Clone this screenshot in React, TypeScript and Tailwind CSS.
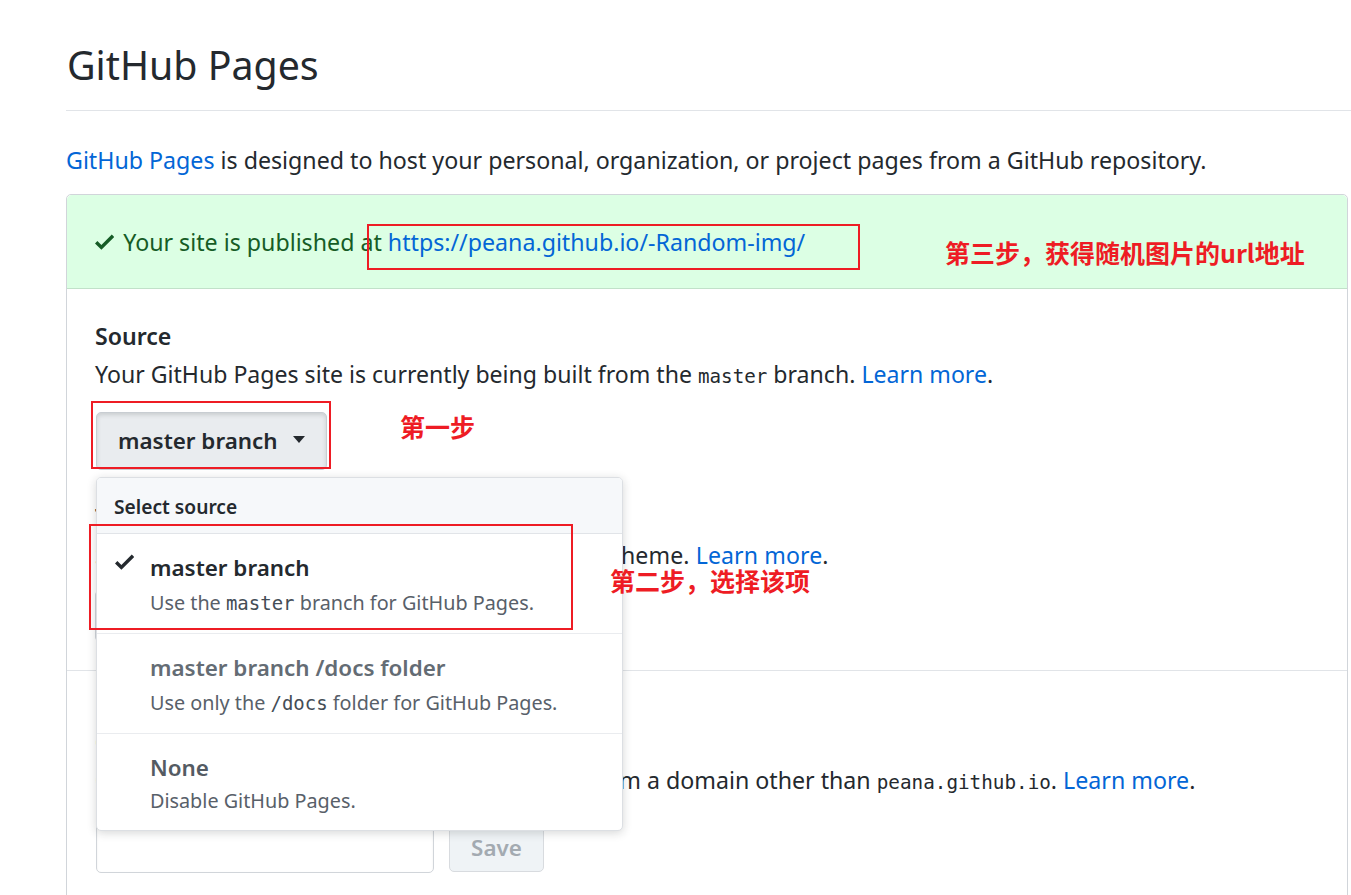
import React from "react";

const mono = { fontFamily: '"DejaVu Sans Mono", "Liberation Mono", monospace' };

function Check({ className, color }: { className?: string; color: string }) {
  return (
    <svg viewBox="0 0 12 16" className={className} fill={color} aria-hidden>
      <path fillRule="evenodd" d="M12 5l-8 8-4-4 1.5-1.5L4 10l6.5-6.5L12 5z" />
    </svg>
  );
}

function Caret() {
  return (
    <span className="inline-block w-0 h-0 border-t-[7px] border-t-[#24292e] border-x-[6.5px] border-x-transparent align-middle ml-[15px] mb-[3px]" />
  );
}

function Annot({ children, className }: { children: React.ReactNode; className: string }) {
  return (
    <div
      className={"absolute whitespace-nowrap font-bold text-[25px] leading-[32px] text-[#ee1c24] " + className}
      style={{ fontFamily: '"Noto Sans CJK SC", "Noto Sans", sans-serif' }}
    >
      {children}
    </div>
  );
}

export default function App() {
  return (
    <div
      className="relative w-[1351px] h-[895px] overflow-hidden bg-white text-[#24292e]"
      style={{ fontFamily: '"Noto Sans", "Noto Sans CJK SC", sans-serif' }}
    >
      <div className="pl-[66px]">
        {/* Title */}
        <div className="pt-[41px] pb-[21px] border-b border-[#e1e4e8]">
          <h2 className="text-[39.3px] leading-[48px] font-normal pl-[1px]">GitHub Pages</h2>
        </div>

        <p className="mt-[32px] text-[23.2px] leading-[34px] whitespace-nowrap">
          <span className="text-[#0366d6]">GitHub Pages</span> is designed to host your personal, organization, or
          project pages from a GitHub repository.
        </p>

        {/* Box */}
        <div className="mt-[17px] w-[1282px] border border-[#d1d5da] rounded-[5px] h-[720px]">
          {/* flash */}
          <div className="bg-[#dcffe4] border-b border-[#c1e1c9] rounded-t-[5px] pt-[30px] pb-[29px] pl-[28px] flex items-center text-[23.2px] leading-[34px] text-[#165c26] whitespace-nowrap">
            <Check className="w-[19.2px] h-[25.6px] mr-[9px]" color="#165c26" />
            <span>
              Your site is published at{" "}
              <span className="text-[#0366d6]">https://peana.github.io/-Random-img/</span>
            </span>
          </div>

          {/* Source + theme */}
          <div className="pl-[28px] pt-[30px] pb-[28px] border-b border-[#e1e4e8] text-[23.1px] leading-[34px] whitespace-nowrap">
            <h3 className="font-semibold">Source</h3>
            <p className="mt-[4px]">
              Your GitHub Pages site is currently being built from the{" "}
              <code className="text-[19.2px]" style={mono}>
                master
              </code>{" "}
              branch. <span className="text-[#0366d6]">Learn more</span>.
            </p>
            <div className="mt-[18px] ml-[1px] inline-flex items-center h-[58px] px-[21px] rounded-[5px] border border-[#c8cdd2] bg-[#e9ecef] shadow-[inset_0_2px_4px_rgba(27,31,35,0.15)] font-semibold text-[22.4px]">
              master branch
              <Caret />
            </div>

            <h3 className="mt-[30px] font-semibold">Theme chooser</h3>
            <p className="mt-[4px] tracking-[0.1px]">
              Select a theme to publish your site with a Jekyll theme.{" "}
              <span className="text-[#0366d6]">Learn more</span>.
            </p>
            <div className="mt-[18px] inline-flex items-center h-[52px] px-[21px] rounded-[5px] border border-[#d1d5da] bg-[#f4f6f8] font-semibold text-[22.4px]">
              Choose a theme
            </div>
          </div>

          {/* Custom domain */}
          <div className="pl-[28px] pt-[54px] text-[23.2px] leading-[34px] whitespace-nowrap">
            <h3 className="font-semibold">Custom domain</h3>
            <p className="mt-[4px]">
              Custom domains allow you to serve your site from a domain other than{" "}
              <code className="text-[19.3px]" style={mono}>
                peana.github.io
              </code>
              . <span className="text-[#0366d6]">Learn more</span>.
            </p>
            <div className="mt-[17px] flex items-start gap-[15px] ml-[1px]">
              <div className="w-[338px] h-[56px] border border-[#d1d5da] rounded-[5px] bg-white shadow-[inset_0_1px_2px_rgba(27,31,35,0.075)]" />
              <div className="mt-[7px] h-[48px] w-[95px] flex items-center justify-center rounded-[5px] border border-[#d8dbdf] bg-[#eff3f6] text-[#a3aab1] font-semibold text-[22.4px]">
                Save
              </div>
            </div>
          </div>
        </div>
      </div>

      {/* Dropdown menu */}
      <div className="absolute left-[96px] top-[477px] w-[527px] bg-white border border-[#dcdfe3] rounded-[5px] shadow-[0_2px_10px_rgba(27,31,35,0.18)] overflow-hidden whitespace-nowrap">
        <div className="h-[56px] bg-[#f6f8fa] border-b border-[#e1e4e8] pl-[17px] pt-[3px] flex items-center font-semibold text-[19.2px] text-[#24292e]">
          Select source
        </div>
        <div className="relative h-[100px] border-b border-[#eaecef] pl-[53px] pt-[17px]">
          <Check className="absolute left-[18px] top-[15px] w-[19.2px] h-[25.6px]" color="#24292e" />
          <div className="text-[22.4px] leading-[34px] font-semibold text-[#24292e]">master branch</div>
          <div className="mt-[4px] text-[19.8px] leading-[28px] text-[#586069]">
            Use the{" "}
            <code className="text-[19px] text-[#444d56]" style={mono}>
              master
            </code>{" "}
            branch for GitHub Pages.
          </div>
        </div>
        <div className="h-[100px] border-b border-[#eaecef] pl-[53px] pt-[17px]">
          <div className="text-[22.4px] leading-[34px] font-semibold text-[#646c74]">master branch /docs folder</div>
          <div className="mt-[4px] text-[19.8px] leading-[28px] text-[#586069]">
            Use only the{" "}
            <code className="text-[19px] text-[#444d56]" style={mono}>
              /docs
            </code>{" "}
            folder for GitHub Pages.
          </div>
        </div>
        <div className="h-[96px] pl-[53px] pt-[17px]">
          <div className="text-[22.4px] leading-[34px] font-semibold text-[#545b63]">None</div>
          <div className="mt-[2px] text-[19.8px] leading-[28px] text-[#586069]">Disable GitHub Pages.</div>
        </div>
      </div>

      {/* Red annotations */}
      <div className="absolute left-[367px] top-[224px] w-[493px] h-[46px] border-2 border-[#ee1c24]" />
      <div className="absolute left-[91px] top-[401px] w-[240px] h-[68px] border-2 border-[#ee1c24]" />
      <div className="absolute left-[89px] top-[524px] w-[484px] h-[106px] border-2 border-[#ee1c24]" />

      <Annot className="left-[945px] top-[236px]">第三步，获得随机图片的url地址</Annot>
      <Annot className="left-[400px] top-[410px]">第一步</Annot>
      <Annot className="left-[610px] top-[564px]">第二步，选择该项</Annot>
    </div>
  );
}
